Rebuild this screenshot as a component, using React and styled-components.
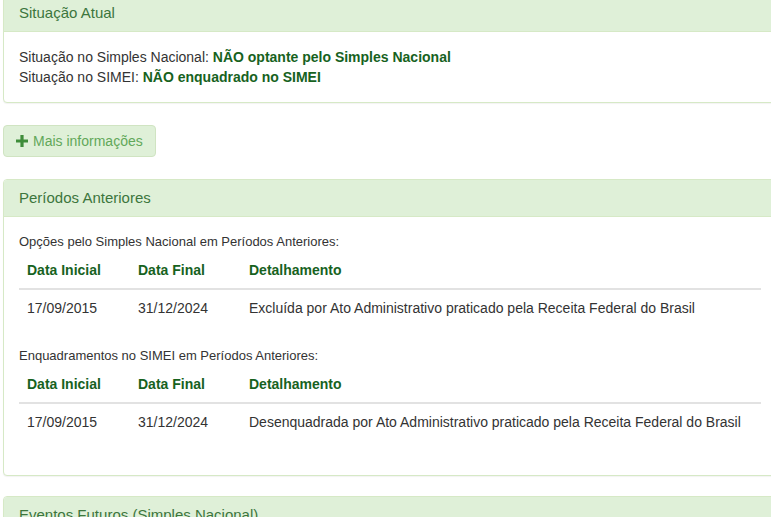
import React from 'react';
import styled, { createGlobalStyle } from 'styled-components';

const GlobalStyle = createGlobalStyle`
  html, body {
    margin: 0;
    padding: 0;
    background: #fff;
    overflow: hidden;
  }
  body {
    font-family: "Liberation Sans", Arial, Helvetica, sans-serif;
    font-size: 14px;
    line-height: 20px;
    color: #333;
  }
`;

const Page = styled.div`
  width: 774px;
  margin-top: -6px;
  padding-left: 3px;
  height: 523px;
`;

const Panel = styled.div`
  background: #fff;
  border: 1px solid #d6e9c6;
  border-radius: 4px;
  box-shadow: 0 1px 1px rgba(0, 0, 0, 0.05);
  margin-bottom: 20px;
`;

const PanelHeading = styled.div`
  background: #dff0d8;
  color: #3c763d;
  padding: 10px 15px;
  border-bottom: 1px solid #d6e9c6;
  border-radius: 3px 3px 0 0;
`;

const PanelTitle = styled.h3`
  margin: 0;
  font-size: 15px;
  font-weight: normal;
  line-height: 16px;
`;

const PanelBody = styled.div`
  padding: 15px;
`;

const Line = styled.div`
  line-height: 20px;
`;

const Highlight = styled.strong`
  color: #17621e;
  font-weight: bold;
`;

const ButtonRow = styled.div`
  margin: 22px 0 22px;
`;

const MoreButton = styled.button`
  display: inline-flex;
  align-items: center;
  gap: 5px;
  height: 32px;
  padding: 0 12px;
  background: #dff0d8;
  border: 1px solid #d0e4c2;
  border-radius: 4px;
  color: #62a85a;
  font-family: inherit;
  font-size: 14px;
  cursor: pointer;
`;

const SectionLabel = styled.div`
  font-size: 13px;
  line-height: 20px;
`;

const Table = styled.table`
  width: 100%;
  table-layout: fixed;
  border-collapse: collapse;
  margin-bottom: 20px;
`;

const Th = styled.th`
  text-align: left;
  padding: 8px;
  line-height: 20px;
  color: #17621e;
  font-weight: bold;
  border-bottom: 2px solid #e2e2e2;
  width: ${p => p.$w || 'auto'};
`;

const Td = styled.td`
  padding: 8px;
  line-height: 20px;
  color: #333;
  white-space: nowrap;
`;

const PlusIcon = () => (
  <svg width="12" height="12" viewBox="0 0 12 12">
    <path d="M4.4 0h3.2v4.4H12v3.2H7.6V12H4.4V7.6H0V4.4h4.4z" fill="#3f8d3a" />
  </svg>
);

const periodos = [
  {
    titulo: 'Opções pelo Simples Nacional em Períodos Anteriores:',
    linhas: [
      ['17/09/2015', '31/12/2024', 'Excluída por Ato Administrativo praticado pela Receita Federal do Brasil'],
    ],
  },
  {
    titulo: 'Enquadramentos no SIMEI em Períodos Anteriores:',
    linhas: [
      ['17/09/2015', '31/12/2024', 'Desenquadrada por Ato Administrativo praticado pela Receita Federal do Brasil'],
    ],
  },
];

export default function App() {
  return (
    <Page>
      <GlobalStyle />
      <Panel>
        <PanelHeading>
          <PanelTitle>Situação Atual</PanelTitle>
        </PanelHeading>
        <PanelBody>
          <Line>
            Situação no Simples Nacional: <Highlight>NÃO optante pelo Simples Nacional</Highlight>
          </Line>
          <Line>
            Situação no SIMEI: <Highlight>NÃO enquadrado no SIMEI</Highlight>
          </Line>
        </PanelBody>
      </Panel>

      <ButtonRow>
        <MoreButton>
          <PlusIcon />
          Mais informações
        </MoreButton>
      </ButtonRow>

      <Panel>
        <PanelHeading>
          <PanelTitle>Períodos Anteriores</PanelTitle>
        </PanelHeading>
        <PanelBody>
          {periodos.map(bloco => (
            <div key={bloco.titulo}>
              <SectionLabel>{bloco.titulo}</SectionLabel>
              <Table>
                <thead>
                  <tr>
                    <Th $w="95px">Data Inicial</Th>
                    <Th $w="95px">Data Final</Th>
                    <Th>Detalhamento</Th>
                  </tr>
                </thead>
                <tbody>
                  {bloco.linhas.map((l, i) => (
                    <tr key={i}>
                      <Td>{l[0]}</Td>
                      <Td>{l[1]}</Td>
                      <Td>{l[2]}</Td>
                    </tr>
                  ))}
                </tbody>
              </Table>
            </div>
          ))}
        </PanelBody>
      </Panel>

      <Panel>
        <PanelHeading>
          <PanelTitle>Eventos Futuros (Simples Nacional)</PanelTitle>
        </PanelHeading>
        <PanelBody />
      </Panel>
    </Page>
  );
}
